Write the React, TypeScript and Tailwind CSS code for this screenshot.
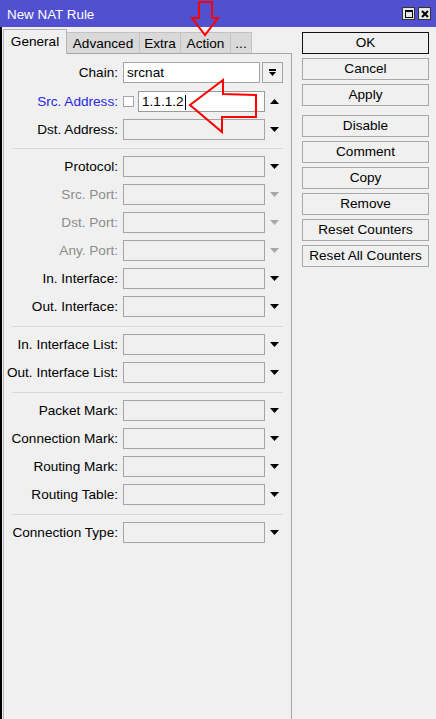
import React from "react";

const FONT = { fontFamily: '"Liberation Sans", Arial, sans-serif' };

function Down({ gray = false }: { gray?: boolean }) {
  return (
    <svg width="9" height="5" viewBox="0 0 9 5" className="block">
      <polygon points="0,0 9,0 4.5,5" fill={gray ? "#a8a8a8" : "#000"} />
    </svg>
  );
}

function Up() {
  return (
    <svg width="9" height="5" viewBox="0 0 9 5" className="block">
      <polygon points="0,5 9,5 4.5,0" fill="#000" />
    </svg>
  );
}

function Label({ text, tone = "normal" }: { text: string; tone?: "normal" | "blue" | "gray" }) {
  const color =
    tone === "blue" ? "text-[#2626e8]" : tone === "gray" ? "text-[#8c8c8c]" : "text-black";
  return (
    <div className={`w-[114px] h-[21px] pt-[1px] flex items-center justify-end whitespace-nowrap text-[13.6px] ${color}`}>
      {text}
    </div>
  );
}

function Row({ label, tone = "normal" }: { label: string; tone?: "normal" | "blue" | "gray" }) {
  return (
    <div className="h-[28px] pt-[4px] flex items-start">
      <Label text={label} tone={tone} />
      <div className="ml-[5px] w-[142px] h-[21px] border border-[#a5a5a5] bg-[#f0f0f0]" />
      <div className="ml-[5px] h-[21px] flex items-center">
        <Down gray={tone === "gray"} />
      </div>
    </div>
  );
}

function Sep({ first = false }: { first?: boolean }) {
  return (
    <div className={first ? "h-[9px] pt-[5px]" : "h-[10px] pt-[6px]"}>
      <div className="ml-[8px] w-[271px] h-px bg-[#d7d7d7]" />
    </div>
  );
}

function Btn({ text, primary = false }: { text: string; primary?: boolean }) {
  return (
    <div
      className={`w-[127px] h-[22px] pt-[1px] flex items-center justify-center text-[13.6px] text-black bg-[#f0f0f0] ${
        primary ? "border-[1.5px] border-[#111]" : "border border-[#a8a8a8]"
      }`}
    >
      {text}
    </div>
  );
}

export default function App() {
  return (
    <div className="relative w-[436px] h-[719px] overflow-hidden bg-[#f0f0f0] flex flex-col" style={FONT}>
      {/* Title bar */}
      <div className="h-[27px] bg-[#5050d0] flex items-start justify-between pl-[7px] pr-[5px]">
        <div className="mt-[7px] text-[13.4px] leading-[16px] text-white">New NAT Rule</div>
        <div className="flex mt-[7px] gap-[3px]">
          <div className="w-[13px] h-[13px] bg-[#e6e6e6] border border-[#333] flex items-center justify-center">
            <div className="w-[8px] h-[8px] border border-black border-t-2" />
          </div>
          <div className="w-[13px] h-[13px] bg-[#e6e6e6] border border-[#333] flex items-center justify-center">
            <svg width="8" height="8" viewBox="0 0 8 8">
              <path d="M1 1 L7 7 M7 1 L1 7" stroke="#000" strokeWidth="2" />
            </svg>
          </div>
        </div>
      </div>

      {/* Body */}
      <div className="flex-1 flex border-l-2 border-black">
        <div className="ml-[1px] w-[289px] flex flex-col">
          {/* Tabs */}
          <div className="h-[27px] flex items-end text-[13.6px] text-black">
            <div className="w-[64px] h-[25px] border border-b-0 border-[#b4b4b4] bg-[#f0f0f0] flex items-center justify-center">
              General
            </div>
            <div className="w-[73px] h-[22px] pt-[2px] border-t border-r border-b border-[#c2c2c2] border-b-[#a5a5a5] bg-[#d9d9d9] flex items-center justify-center">
              Advanced
            </div>
            <div className="w-[41px] h-[22px] pt-[2px] border-t border-r border-b border-[#c2c2c2] border-b-[#a5a5a5] bg-[#d9d9d9] flex items-center justify-center">
              Extra
            </div>
            <div className="w-[50px] h-[22px] pt-[2px] border-t border-r border-b border-[#c2c2c2] border-b-[#a5a5a5] bg-[#d9d9d9] flex items-center justify-center">
              Action
            </div>
            <div className="w-[21px] h-[22px] pt-[2px] border-t border-r border-b border-[#c2c2c2] border-b-[#a5a5a5] bg-[#d9d9d9] flex items-center justify-center">
              ...
            </div>
            <div className="flex-1 h-px bg-[#a5a5a5]" />
          </div>

          {/* Panel */}
          <div className="flex-1 border-l border-r border-[#a5a5a5] border-l-[#b4b4b4] pt-[4px]">
            {/* Chain */}
            <div className="h-[29px] pt-[4px] flex items-start">
              <Label text="Chain:" />
              <div className="ml-[5px] w-[137px] h-[21px] pt-[1px] border border-[#a5a5a5] bg-white flex items-center pl-[3px] text-[13.6px] text-black">
                srcnat
              </div>
              <div className="ml-[2px] w-[21px] h-[21px] border border-[#a5a5a5] bg-[#f0f0f0] flex flex-col items-center justify-center">
                <div className="w-[7px] h-[2px] bg-black" />
                <svg width="9" height="5" viewBox="0 0 9 5" className="block mt-[1px]">
                  <polygon points="1,0 8,0 4.5,4" fill="#000" />
                </svg>
              </div>
            </div>

            {/* Src Address */}
            <div className="h-[28px] pt-[4px] flex items-start">
              <Label text="Src. Address:" tone="blue" />
              <div className="ml-[5px] h-[21px] flex items-center">
                <div className="w-[11px] h-[11px] border border-[#a5a5a5] bg-white" />
              </div>
              <div className="ml-[4px] w-[127px] h-[21px] pt-[1px] border border-[#9a9a9a] bg-white flex items-center pl-[3px] text-[13.6px] text-black">
                1.1.1.2
                <div className="ml-[1px] w-px h-[15px] bg-black" />
              </div>
              <div className="ml-[5px] h-[21px] flex items-center">
                <Up />
              </div>
            </div>

            <Row label="Dst. Address:" />
            <Sep first />
            <Row label="Protocol:" />
            <Row label="Src. Port:" tone="gray" />
            <Row label="Dst. Port:" tone="gray" />
            <Row label="Any. Port:" tone="gray" />
            <Row label="In. Interface:" />
            <Row label="Out. Interface:" />
            <Sep />
            <Row label="In. Interface List:" />
            <Row label="Out. Interface List:" />
            <Sep />
            <Row label="Packet Mark:" />
            <Row label="Connection Mark:" />
            <Row label="Routing Mark:" />
            <Row label="Routing Table:" />
            <Sep />
            <Row label="Connection Type:" />
          </div>
        </div>

        {/* Buttons */}
        <div className="ml-[10px] pt-[5px] flex flex-col">
          <Btn text="OK" primary />
          <div className="mt-[4px] flex flex-col gap-[4px]">
            <Btn text="Cancel" />
            <Btn text="Apply" />
          </div>
          <div className="mt-[9px] flex flex-col gap-[4px]">
            <Btn text="Disable" />
            <Btn text="Comment" />
            <Btn text="Copy" />
            <Btn text="Remove" />
            <Btn text="Reset Counters" />
            <Btn text="Reset All Counters" />
          </div>
        </div>
      </div>

      {/* Annotation arrows */}
      <svg className="absolute left-0 top-0 pointer-events-none" width="436" height="719" viewBox="0 0 436 719">
        <polygon
          points="199,2 212,2 212,18 218,18 205,35 192,18 199,18"
          fill="none"
          stroke="#ff0000"
          strokeWidth="2"
          strokeLinejoin="miter"
        />
        <polygon
          points="190,105 223,80 223,94 256,95 256,117 222,117 222,132"
          fill="none"
          stroke="#ff0000"
          strokeWidth="2"
          strokeLinejoin="miter"
        />
      </svg>
    </div>
  );
}
